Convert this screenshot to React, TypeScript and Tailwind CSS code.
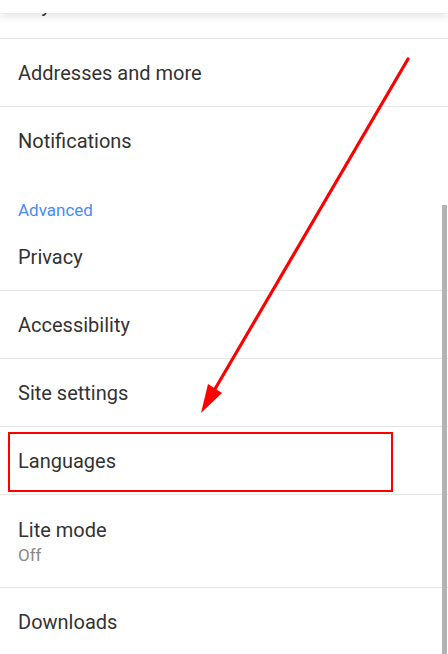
const rows: { label: string; sub?: string; divider?: boolean }[] = [
  { label: 'Addresses and more', divider: true },
  { label: 'Notifications' },
];

const advanced: { label: string; sub?: string; divider?: boolean }[] = [
  { label: 'Privacy', divider: true },
  { label: 'Accessibility', divider: true },
  { label: 'Site settings', divider: true },
  { label: 'Languages', divider: true },
  { label: 'Lite mode', sub: 'Off', divider: true },
  { label: 'Downloads' },
];

function Row({ label, sub, divider }: { label: string; sub?: string; divider?: boolean }) {
  return (
    <div
      className={
        'flex flex-col px-[18px] ' +
        (sub ? 'h-[93px] justify-start pt-[23px] ' : 'h-[68px] justify-center ') +
        (divider ? 'border-b border-[#e6e6e6]' : '')
      }
    >
      <div className="text-[20px] leading-[24px] text-[#333333]">{label}</div>
      {sub && <div className="mt-[2px] text-[17px] leading-[22px] text-[#8a8a8a]">{sub}</div>}
    </div>
  );
}

export default function App() {
  return (
    <div className="relative h-[654px] w-[448px] overflow-hidden bg-white font-['Roboto',sans-serif]">
      {/* list */}
      <div className="-mt-[29px]">
        <Row label="Payment methods" divider />
        {rows.map((r) => (
          <Row key={r.label} {...r} />
        ))}
        <div className="flex h-[48px] items-end px-[18px] pb-[2px] text-[17px] leading-[22px] text-[#4a8af4]">
          Advanced
        </div>
        {advanced.map((r) => (
          <Row key={r.label} {...r} />
        ))}
      </div>

      {/* toolbar edge with shadow */}
      <div className="absolute left-0 right-0 top-0 h-[13px] bg-white shadow-[0_3px_8px_rgba(0,0,0,0.12)]" />

      {/* scrollbar */}
      <div className="absolute bottom-0 right-[1px] top-[205px] w-[5px] bg-[#b3b3b4]" />

      {/* highlight box */}
      <div className="absolute left-[8px] top-[432px] h-[60px] w-[385px] border-2 border-[#ff0000]" />

      {/* arrow */}
      <svg className="absolute inset-0" width="448" height="654" viewBox="0 0 448 654">
        <line x1="408" y1="59" x2="215" y2="389" stroke="#ff0000" strokeWidth="3.2" strokeLinecap="round" />
        <polygon points="201,413 208,384 222,393" fill="#ff0000" />
      </svg>
    </div>
  );
}
